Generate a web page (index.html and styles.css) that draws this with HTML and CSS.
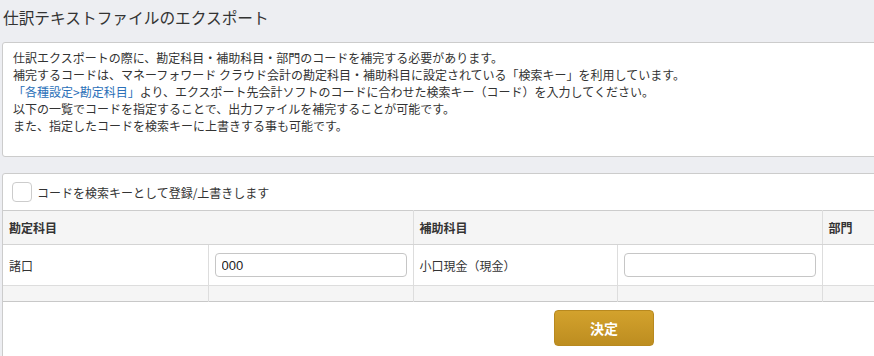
FILE: index.html
```html
<!DOCTYPE html>
<html lang="ja">

<head>
    <meta charset="utf-8">
    <title>仕訳テキストファイルのエクスポート</title>
    <link rel="stylesheet" href="styles.css">
</head>

<body>
    <div class="page">
        <h1 class="title">仕訳テキストファイルのエクスポート</h1>

        <div class="notice">
            <p>仕訳エクスポートの際に、勘定科目・補助科目・部門のコードを補完する必要があります。</p>
            <p>補完するコードは、マネーフォワード クラウド会計の勘定科目・補助科目に設定されている「検索キー」を利用しています。</p>
            <p><a href="#">「各種設定&gt;勘定科目」</a>より、エクスポート先会計ソフトのコードに合わせた検索キー（コード）を入力してください。</p>
            <p>以下の一覧でコードを指定することで、出力ファイルを補完することが可能です。</p>
            <p>また、指定したコードを検索キーに上書きする事も可能です。</p>
        </div>

        <div class="panel">
            <label class="overwrite">
                <span class="checkbox"></span>
                コードを検索キーとして登録/上書きします
            </label>

            <table class="codes">
                <colgroup>
                    <col class="col-a">
                    <col class="col-a">
                    <col class="col-b">
                    <col class="col-a">
                    <col>
                    <col>
                </colgroup>
                <thead>
                    <tr>
                        <th colspan="2">勘定科目</th>
                        <th colspan="2">補助科目</th>
                        <th colspan="2">部門</th>
                    </tr>
                </thead>
                <tbody>
                    <tr>
                        <td>諸口</td>
                        <td><input type="text" class="code-input" value="000"></td>
                        <td>小口現金（現金）</td>
                        <td><input type="text" class="code-input" value=""></td>
                        <td></td>
                        <td></td>
                    </tr>
                    <tr class="blank">
                        <td></td>
                        <td></td>
                        <td></td>
                        <td></td>
                        <td></td>
                        <td></td>
                    </tr>
                </tbody>
            </table>

            <div class="actions">
                <button class="submit">決定</button>
            </div>
        </div>
    </div>
</body>

</html>
```

FILE: styles.css
```css
* {
    box-sizing: border-box;
}

html,
body {
    margin: 0;
    overflow: hidden;
}

body {
    background-color: #edeef2;
    color: #333;
    font-family: "Noto Sans CJK JP", "Noto Sans", sans-serif;
    font-size: 12px;
}

.page {
    width: 1210px;
    padding: 0 0 0 2px;
}

.title {
    margin: 0;
    padding: 8px 1px 0;
    height: 42px;
    font-size: 15.7px;
    line-height: 20px;
    font-weight: normal;
    color: #333;
}

.notice {
    background: #fff;
    border: 1px solid #ccc;
    border-radius: 3px;
    padding: 6px 10px 22px;
    width: 1204px;
    height: 115px;
}

.notice p {
    margin: 0;
    line-height: 17px;
}

.notice a {
    color: #2a6fb8;
    text-decoration: none;
}

.panel {
    margin-top: 16px;
    background: #fff;
    border: 1px solid #ccc;
    border-radius: 3px;
    width: 1204px;
    padding-bottom: 12px;
}

.overwrite {
    display: flex;
    align-items: center;
    gap: 5px;
    height: 36px;
    padding: 0 9px;
    line-height: 17px;
}

.checkbox {
    width: 20px;
    height: 20px;
    border: 1px solid #ccc;
    border-radius: 4px;
    background: #fff;
}

.codes {
    width: 100%;
    table-layout: fixed;
    border-collapse: collapse;
    border-top: 1px solid #ccc;
    border-bottom: 1px solid #c8c8c8;
}

.col-a {
    width: 205px;
}

.col-b {
    width: 204px;
}

.codes th,
.codes td {
    padding: 8px 6px;
    line-height: 17px;
    text-align: left;
    vertical-align: middle;
    border-left: 1px solid #ddd;
    border-bottom: 1px solid #ddd;
}

.codes th:first-child,
.codes td:first-child {
    border-left: none;
}

.codes th {
    background: #f5f5f5;
    font-weight: bold;
    border-bottom-color: #d4d4d4;
}

.codes .blank td {
    background: #f5f5f5;
    height: 16px;
    padding: 0 6px;
    border-bottom: none;
}

.code-input {
    display: block;
    width: 100%;
    height: 24px;
    margin: 0;
    padding: 2px 6px;
    border: 1px solid #c6c6c6;
    border-radius: 4px;
    font-family: "Liberation Sans", sans-serif;
    font-size: 13px;
    color: #222;
    background: #fff;
}

.actions {
    display: flex;
    justify-content: center;
    padding: 8px 0 0;
}

.submit {
    width: 100px;
    height: 36px;
    border: 1px solid #b8891f;
    border-radius: 4px;
    background: linear-gradient(#d3a22d, #bd8d20);
    color: #fff;
    font-family: "Noto Sans CJK JP", sans-serif;
    font-size: 14px;
    font-weight: bold;
    cursor: pointer;
}
```
